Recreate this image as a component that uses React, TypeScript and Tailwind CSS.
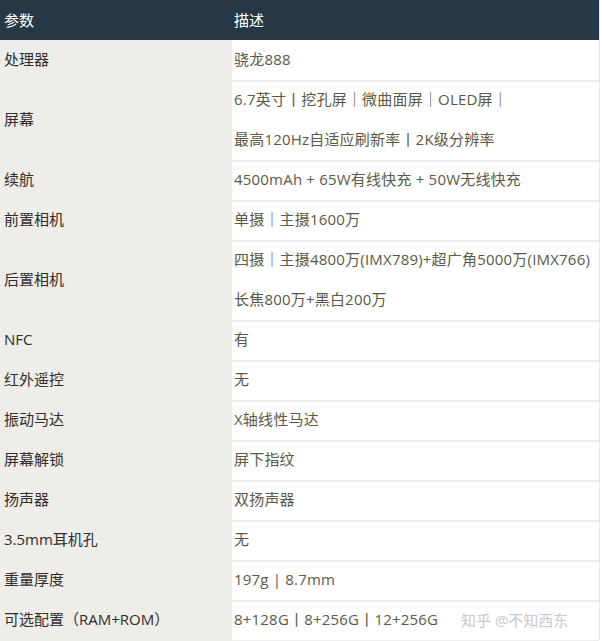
const rows: { k: string; v: string[] }[] = [
  { k: "处理器", v: ["骁龙888"] },
  { k: "屏幕", v: ["6.7英寸丨挖孔屏｜微曲面屏｜OLED屏｜", "最高120Hz自适应刷新率丨2K级分辨率"] },
  { k: "续航", v: ["4500mAh + 65W有线快充 + 50W无线快充"] },
  { k: "前置相机", v: ["单摄｜主摄1600万"] },
  { k: "后置相机", v: ["四摄｜主摄4800万(IMX789)+超广角5000万(IMX766)", "长焦800万+黑白200万"] },
  { k: "NFC", v: ["有"] },
  { k: "红外遥控", v: ["无"] },
  { k: "振动马达", v: ["X轴线性马达"] },
  { k: "屏幕解锁", v: ["屏下指纹"] },
  { k: "扬声器", v: ["双扬声器"] },
  { k: "3.5mm耳机孔", v: ["无"] },
  { k: "重量厚度", v: ["197g | 8.7mm"] },
  { k: "可选配置（RAM+ROM）", v: ["8+128G丨8+256G丨12+256G"] },
];

export default function App() {
  return (
    <div
      className="relative h-[641px] w-[602px] overflow-hidden bg-white text-[15px]"
      style={{ fontFamily: '"Open Sans", "Noto Sans CJK SC", sans-serif' }}
    >
      <div className="w-[600px] border-r border-[#e6e6e6]">
        <div className="grid h-10 grid-cols-[232px_1fr] items-center bg-[#263745] text-white">
          <div className="pl-1">参数</div>
          <div className="pl-0.5">描述</div>
        </div>
        {rows.map((r) => (
          <div
            key={r.k}
            className={r.v.length > 1 ? "grid h-20 grid-cols-[232px_1fr]" : "grid h-10 grid-cols-[232px_1fr]"}
          >
            <div className="flex items-center bg-[#efede9] pb-1 pl-1 text-[#2e2e2e]">{r.k}</div>
            <div className="border-b-2 border-[#eeeeee] pl-0.5 text-[#5a5a48]">
              {r.v.map((line) => (
                <div key={line} className="h-10 leading-[39px] whitespace-nowrap tracking-[0.2px]">
                  {line}
                </div>
              ))}
            </div>
          </div>
        ))}
      </div>
      <div className="absolute left-[461px] top-[606px] text-[15px] leading-[28px] text-[#c9c9c9]">
        知乎 @不知西东
      </div>
    </div>
  );
}
